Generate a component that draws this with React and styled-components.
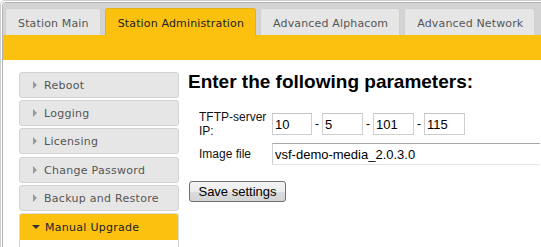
import React from 'react'
import styled, { createGlobalStyle } from 'styled-components'

const GlobalStyle = createGlobalStyle`
  html, body {
    margin: 0;
    background: #fff;
    overflow: hidden;
  }
`

const YELLOW = '#fcc10f'

const tabs = ['Station Main', 'Station Administration', 'Advanced Alphacom', 'Advanced Network']
const menu = ['Reboot', 'Logging', 'Licensing', 'Change Password', 'Backup and Restore', 'Manual Upgrade']

export default function App() {
  return (
    <>
      <GlobalStyle />
      <Frame>
        <Inner>
          <TabBar>
            {tabs.map((t, i) => (
              <Tab key={t} $active={i === 1}>{t}</Tab>
            ))}
          </TabBar>
          <Band />
          <Body>
            <Sidebar>
              {menu.map((m, i) => (
                <MenuItem key={m} $active={i === menu.length - 1}>
                  <Arrow $open={i === menu.length - 1} />
                  {m}
                </MenuItem>
              ))}
              <MenuPanel />
            </Sidebar>
            <Main>
              <Heading>Enter the following parameters:</Heading>
              <Form>
                <Label>TFTP-server IP:</Label>
                <IpRow>
                  <Field $w={40} defaultValue='10' />
                  <Dash>-</Dash>
                  <Field $w={41} defaultValue='5' />
                  <Dash>-</Dash>
                  <Field $w={41} defaultValue='101' />
                  <Dash>-</Dash>
                  <Field $w={41} defaultValue='115' />
                </IpRow>
                <Label>Image file</Label>
                <FileField defaultValue='vsf-demo-media_2.0.3.0' />
              </Form>
              <SaveButton>Save settings</SaveButton>
            </Main>
          </Body>
        </Inner>
      </Frame>
    </>
  )
}

const Frame = styled.div`
  width: 720px;
  height: 247px;
  border: 1px solid #d0d0d0;
  border-bottom: none;
  border-radius: 5px 0 0 0;
  padding: 1px 0 0 1px;
  box-sizing: border-box;
  overflow: hidden;
`

const Inner = styled.div`
  height: 100%;
  border-left: 1px solid #b4b4b4;
  border-top: 1px solid #b4b4b4;
  border-radius: 4px 0 0 0;
`

const TabBar = styled.div`
  display: flex;
  align-items: flex-end;
  gap: 4px;
  height: 32px;
  padding: 4px 0 0 2px;
  box-sizing: border-box;
  background: #d3d3d3;
  border-radius: 4px 0 0 0;
`

const Tab = styled.div`
  display: flex;
  align-items: center;
  height: ${p => (p.$active ? '28px' : '27px')};
  margin-bottom: ${p => (p.$active ? '-1px' : '0')};
  padding: 2px 11px 0 12px;
  box-sizing: border-box;
  background: ${p => (p.$active ? YELLOW : '#e6e6e6')};
  border: 1px solid ${p => (p.$active ? '#e2b21a' : '#d0d0d0')};
  border-bottom: none;
  border-radius: 3px 3px 0 0;
  font-family: 'DejaVu Sans', Verdana, sans-serif;
  font-size: 11px;
  letter-spacing: 0.15px;
  color: ${p => (p.$active ? '#212121' : '#555')};
  white-space: nowrap;
`

const Band = styled.div`
  height: 25px;
  background: ${YELLOW};
`

const Body = styled.div`
  display: flex;
  align-items: flex-start;
  padding: 12px 0 0 16px;
`

const Sidebar = styled.div`
  display: flex;
  flex-direction: column;
  gap: 2px;
  width: 160px;
  flex: none;
`

const MenuItem = styled.div`
  display: flex;
  align-items: center;
  height: ${p => (p.$active ? '27px' : '26px')};
  padding-left: 13px;
  box-sizing: border-box;
  background: ${p => (p.$active ? YELLOW : '#e6e6e6')};
  border: 1px solid ${p => (p.$active ? '#dcdcdc' : '#d3d3d3')};
  border-bottom: ${p => (p.$active ? 'none' : '')};
  border-radius: ${p => (p.$active ? '3px 3px 0 0' : '3px')};
  font-family: 'DejaVu Sans', Verdana, sans-serif;
  font-size: 11px;
  letter-spacing: 0.28px;
  color: ${p => (p.$active ? '#222' : '#555')};
  white-space: nowrap;
  &:nth-child(4) {
    margin-top: 1px;
  }
`

const Arrow = styled.span`
  width: 0;
  height: 0;
  margin-right: ${p => (p.$open ? '5px' : '7px')};
  margin-left: ${p => (p.$open ? '-1px' : '0')};
  border-style: solid;
  border-color: transparent;
  ${p =>
    p.$open
      ? `border-width: 4px 4px 0 4px; border-top-color: #333;`
      : `border-width: 4px 0 4px 4px; border-left-color: #999;`}
`

const MenuPanel = styled.div`
  height: 40px;
  margin-top: -2px;
  border: 1px solid #d3d3d3;
  border-top: none;
  background: #fff;
`

const Main = styled.div`
  margin-left: 9px;
  flex: 1;
`

const Heading = styled.h2`
  margin: 0;
  font-family: 'Liberation Sans', Arial, sans-serif;
  font-weight: bold;
  font-size: 19px;
  line-height: 20px;
  color: #000;
  white-space: nowrap;
`

const Form = styled.div`
  display: grid;
  grid-template-columns: 73px 1fr;
  grid-template-rows: 28px 22px;
  row-gap: 5px;
  align-items: center;
  margin-top: 18px;
  padding-left: 11px;
`

const Label = styled.div`
  font-family: 'Liberation Sans', Arial, sans-serif;
  font-size: 12px;
  line-height: 14px;
  color: #111;
  padding-right: 4px;
`

const IpRow = styled.div`
  display: flex;
  align-items: center;
`

const Field = styled.input`
  width: ${p => p.$w}px;
  height: 22px;
  box-sizing: border-box;
  margin: 0;
  padding: 0 2px;
  border: 1px solid #cfcfcf;
  border-top-color: #c4c4c4;
  font-family: 'Liberation Sans', Tahoma, sans-serif;
  font-size: 13px;
  color: #000;
  outline: none;
`

const FileField = styled(Field)`
  width: 268px;
  border-right: none;
  border-top-color: #a8a8a8;
  border-left-color: #cfcfcf;
  border-bottom-color: #e4e4e4;
`

const Dash = styled.span`
  margin: 0 3px;
  font-family: 'Liberation Sans', Arial, sans-serif;
  font-size: 12px;
  color: #000;
`

const SaveButton = styled.button`
  display: block;
  margin: 16px 0 0 1px;
  width: 97px;
  height: 21px;
  padding: 0;
  border: 1px solid #707070;
  border-radius: 3px;
  background: linear-gradient(#f4f4f4 0%, #ececec 50%, #dcdcdc 51%, #d4d4d4 100%);
  font-family: 'Liberation Sans', Tahoma, sans-serif;
  font-size: 13px;
  color: #000;
`
